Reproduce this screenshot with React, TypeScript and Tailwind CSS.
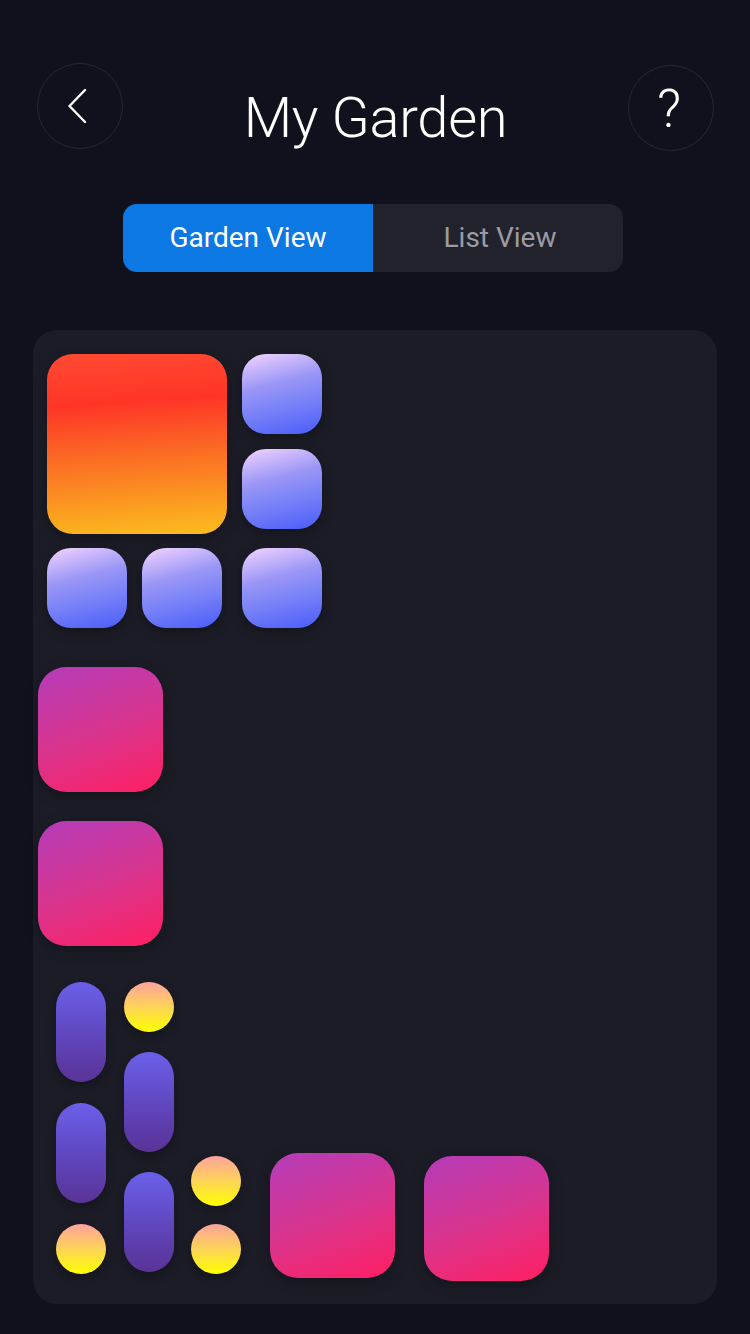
const Big = () => (
  <div className="w-[180px] h-[180px] rounded-[26px] bg-[linear-gradient(176deg,#ff4a32_0%,#ff3527_28%,#fb6a24_55%,#fcbd1e_100%)] shadow-[0_4px_12px_rgba(0,0,0,0.3)]" />
);

const Blue = ({ className = "" }: { className?: string }) => (
  <div
    className={
      "w-[80px] h-[80px] rounded-[24px] bg-[linear-gradient(165deg,#f3d4ff_0%,#9a96f6_38%,#7680f8_65%,#4a5cf8_100%)] shadow-[0_4px_12px_rgba(0,0,0,0.3)] " +
      className
    }
  />
);

const Pink = ({ className = "" }: { className?: string }) => (
  <div
    className={
      "w-[125px] h-[125px] rounded-[28px] bg-[linear-gradient(160deg,#b43cba_0%,#d8358f_50%,#ff1f62_100%)] shadow-[0_4px_14px_rgba(0,0,0,0.3)] shrink-0 " +
      className
    }
  />
);

const Pill = () => (
  <div className="w-[50px] h-[100px] rounded-full bg-[linear-gradient(180deg,#6b60ea_0%,#5f45bc_55%,#5a3396_100%)] shadow-[0_4px_10px_rgba(0,0,0,0.3)]" />
);

const Sun = () => (
  <div className="w-[50px] h-[50px] rounded-full bg-[linear-gradient(180deg,#ffa29d_0%,#fdd458_50%,#ffff00_100%)] shadow-[0_4px_10px_rgba(0,0,0,0.3)]" />
);

export default function App() {
  return (
    <div className="w-[750px] h-[1334px] bg-[#10111c] font-['Roboto',sans-serif] text-white overflow-hidden">
      {/* Header */}
      <header className="flex items-start justify-between pt-[63px] px-[37px] h-[204px]">
        <button className="w-[86px] h-[86px] rounded-full border border-[#262733] flex items-center justify-center">
          <svg width="20" height="36" viewBox="0 0 20 36" className="-ml-[4px] -mt-[1px]" fill="none">
            <polyline points="17,2 1.5,18 17,34" stroke="white" strokeWidth="2.4" strokeLinecap="round" strokeLinejoin="round" />
          </svg>
        </button>
        <h1 className="text-[56px] font-light leading-none mt-[27px] tracking-[-0.3px]">My Garden</h1>
        <button className="w-[86px] h-[86px] rounded-full border border-[#262733] flex items-center justify-center mt-[2px] -mr-[1px]">
          <span className="text-[53px] font-light leading-none mt-[2px] -ml-[4px]">?</span>
        </button>
      </header>

      {/* Toggle */}
      <div className="flex justify-center">
        <div className="flex w-[500px] h-[68px] rounded-[14px] overflow-hidden bg-[#22222d] -ml-[4px]">
          <div className="w-[250px] bg-[#0b78e3] flex items-center justify-center text-[28px] text-white">Garden View</div>
          <div className="w-[250px] flex items-center justify-center text-[28px] text-[#9b9ba4] pl-[4px]">List View</div>
        </div>
      </div>

      {/* Garden */}
      <div className="mx-[33px] mt-[58px] h-[974px] rounded-[24px] bg-[#1c1c27] pt-[24px]">
        <div className="pl-[14px]">
          <div className="flex">
            <Big />
            <div className="ml-[15px] flex flex-col gap-[15px]">
              <Blue />
              <Blue />
            </div>
          </div>
          <div className="flex mt-[14px]">
            <Blue />
            <Blue className="ml-[15px]" />
            <Blue className="ml-[20px]" />
          </div>
        </div>

        <div className="pl-[5px] mt-[39px] flex flex-col gap-[29px]">
          <Pink />
          <Pink />
        </div>

        <div className="flex items-start pl-[23px] mt-[36px]">
          <div className="flex flex-col gap-[21px]">
            <Pill />
            <Pill />
            <Sun />
          </div>
          <div className="flex flex-col gap-[20px] ml-[18px]">
            <Sun />
            <Pill />
            <Pill />
          </div>
          <div className="flex flex-col gap-[18px] ml-[17px] mt-[174px]">
            <Sun />
            <Sun />
          </div>
          <Pink className="ml-[29px] mt-[171px]" />
          <Pink className="ml-[29px] mt-[174px]" />
        </div>
      </div>
    </div>
  );
}
